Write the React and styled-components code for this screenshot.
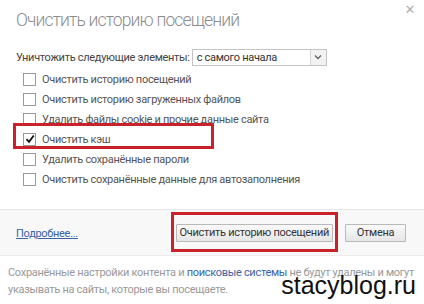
import React from "react";
import styled, { createGlobalStyle } from "styled-components";

const GlobalStyle = createGlobalStyle`
  html, body {
    margin: 0;
    padding: 0;
    background: #ffffff;
  }
  body {
    font-family: Roboto, "Liberation Sans", sans-serif;
    font-size: 11px;
    letter-spacing: -0.3px;
    color: #333;
  }
`;

const Dialog = styled.div`
  position: relative;
  width: 424px;
  height: 304px;
  overflow: hidden;
  background: #fff;
`;

const Close = styled.span`
  position: absolute;
  top: 2px;
  right: 9px;
  font-size: 13px;
  color: #b0b0b0;
  font-family: "DejaVu Sans", sans-serif;
`;

const Title = styled.h1`
  margin: 0;
  padding: 10px 16px 0;
  height: 32px;
  font-size: 17.5px;
  font-weight: 300;
  letter-spacing: -0.85px;
  color: #8c8c8c;
`;

const Body = styled.div`
  padding: 5px 16px 20px;
`;

const RangeRow = styled.div`
  display: flex;
  align-items: center;
  gap: 2px;
  height: 20px;
  margin-bottom: 2px;
  color: #444;
`;

const Select = styled.div`
  display: flex;
  align-items: stretch;
  width: 133px;
  height: 15px;
  border: 1px solid #c4c4c4;
  background: #fff;
  color: #333;
`;

const SelectText = styled.span`
  flex: 1;
  padding-left: 4px;
  line-height: 15px;
`;

const SelectArrow = styled.span`
  display: flex;
  align-items: center;
  justify-content: center;
  width: 15px;
  border-left: 1px solid #d6d6d6;
  background: #f2f2f2;
`;

const List = styled.div`
  display: flex;
  flex-direction: column;
  padding-left: 7px;
`;

const Row = styled.label`
  position: relative;
  display: flex;
  align-items: center;
  gap: 6px;
  height: 20px;
  color: #555;

  ${({ $marked }) =>
    $marked &&
    `
    &::after {
      content: "";
      position: absolute;
      left: -10px;
      top: -6px;
      width: 195px;
      height: 20px;
      border: 3px solid #c8222b;
    }
  `}
`;

const Box = styled.span`
  display: flex;
  align-items: center;
  justify-content: center;
  width: 11px;
  height: 11px;
  border: 1px solid #9a9a9a;
  background: #fff;
`;

const Footer = styled.div`
  display: flex;
  align-items: center;
  justify-content: space-between;
  height: 45px;
  padding: 0 18px 0 16px;
  border-top: 1px solid #e6e6e6;
  border-bottom: 1px solid #ececec;
  background: #f8f8f8;
`;

const More = styled.a`
  color: #3b64a8;
  text-decoration: underline;
  margin-top: 2px;
`;

const Buttons = styled.div`
  display: flex;
  gap: 12px;
`;

const Button = styled.button`
  position: relative;
  height: 18px;
  padding: 0 ${({ $wide }) => ($wide ? "3px" : "10px")};
  min-width: 61px;
  border: 1px solid #b9b9b9;
  border-radius: 1px;
  background: linear-gradient(#f9f9f9, #e6e6e6);
  font-family: inherit;
  font-size: 11px;
  letter-spacing: inherit;
  line-height: 15px;
  color: #333;

  ${({ $marked }) =>
    $marked &&
    `
    &::after {
      content: "";
      position: absolute;
      left: -6px;
      right: -6px;
      top: -13px;
      bottom: -11px;
      border: 3px solid #c8222b;
    }
  `}
`;

const Note = styled.p`
  margin: 0;
  padding: 8px 8px 0;
  line-height: 17px;
  color: #999;
  font-size: 11px;
`;

const NoteLink = styled.span`
  color: #3b64a8;
`;

const Watermark = styled.div`
  position: absolute;
  right: 8px;
  bottom: 4px;
  font-family: "Liberation Sans", Arial, sans-serif;
  font-size: 25px;
  letter-spacing: 0;
  color: #111;
`;

const items = [
  { label: "Очистить историю посещений", checked: false },
  { label: "Очистить историю загруженных файлов", checked: false },
  { label: "Удалить файлы cookie и прочие данные сайта", checked: false },
  { label: "Очистить кэш", checked: true, marked: true },
  { label: "Удалить сохранённые пароли", checked: false },
  { label: "Очистить сохранённые данные для автозаполнения", checked: false },
];

const Check = () => (
  <svg width="10" height="10" viewBox="0 0 10 10">
    <path d="M1.5 5.2 L4 7.8 L8.8 1.5" fill="none" stroke="#111" strokeWidth="1.8" />
  </svg>
);

const Arrow = () => (
  <svg width="8" height="6" viewBox="0 0 8 6">
    <path d="M1 1.5 L4 4.5 L7 1.5" fill="none" stroke="#666" strokeWidth="1.4" />
  </svg>
);

const App = () => {
  return (
    <Dialog>
      <GlobalStyle />
      <Close>✕</Close>
      <Title>Очистить историю посещений</Title>
      <Body>
        <RangeRow>
          Уничтожить следующие элементы:
          <Select>
            <SelectText>с самого начала</SelectText>
            <SelectArrow>
              <Arrow />
            </SelectArrow>
          </Select>
        </RangeRow>
        <List>
          {items.map((item) => (
            <Row key={item.label} $marked={item.marked}>
              <Box>{item.checked && <Check />}</Box>
              {item.label}
            </Row>
          ))}
        </List>
      </Body>
      <Footer>
        <More>Подробнее...</More>
        <Buttons>
          <Button $wide $marked>Очистить историю посещений</Button>
          <Button>Отмена</Button>
        </Buttons>
      </Footer>
      <Note>
        Сохранённые настройки контента и <NoteLink>поисковые системы</NoteLink> не будут удалены и могут
        указывать на сайты, которые вы посещаете.
      </Note>
      <Watermark>stacyblog.ru</Watermark>
    </Dialog>
  );
};

export default App;
